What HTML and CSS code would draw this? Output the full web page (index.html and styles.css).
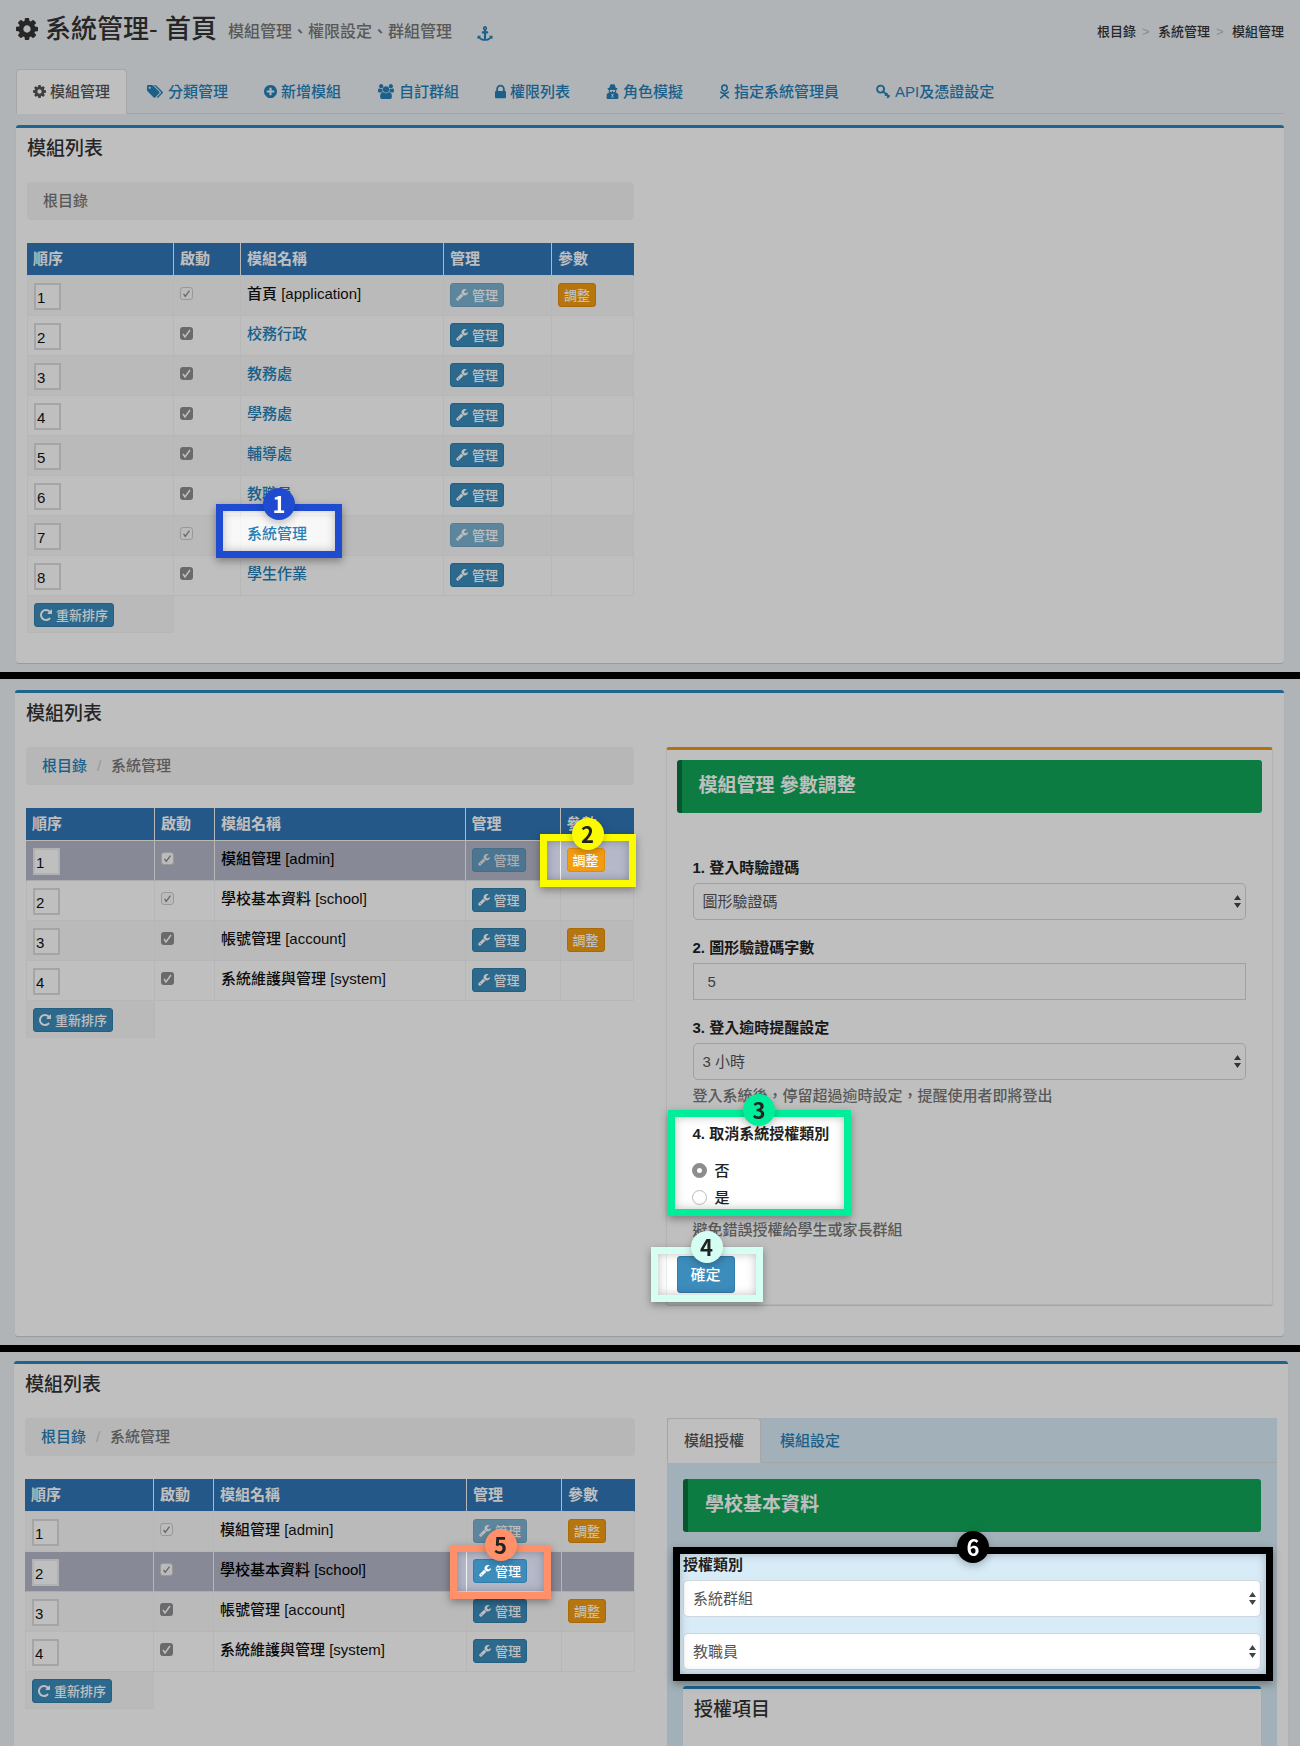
FILE: index.html
```html
<!DOCTYPE html>
<html lang="zh-Hant">
<head>
<meta charset="utf-8">
<title>系統管理 - 首頁</title>
<link rel="stylesheet" href="styles.css">
</head>
<body>
<svg class="sprite" aria-hidden="true">
  <symbol id="i-cog" viewBox="128 128 1536 1536"><path d="M1152 896q0-106-75-181t-181-75-181 75-75 181 75 181 181 75 181-75 75-181zm512-109v222q0 12-8 23t-20 13l-185 28q-19 54-39 91 35 50 107 138 10 12 10 25t-9 23q-27 37-99 108t-94 71q-12 0-26-9l-138-108q-44 23-91 38-16 136-29 186-7 28-36 28h-222q-14 0-24.5-8.5t-11.5-21.5l-28-184q-49-16-90-37l-141 107q-10 9-25 9-14 0-25-11-126-114-165-168-7-10-7-23 0-12 8-23 15-21 51-66.5t54-70.5q-27-50-41-99l-183-27q-13-2-21-12.5t-8-23.5v-222q0-12 8-23t19-13l186-28q14-46 39-92-40-57-107-138-10-12-10-24 0-10 9-23 26-36 98.5-107.5t94.5-71.5q13 0 26 10l138 107q44-23 91-38 16-136 29-186 7-28 36-28h222q14 0 24.5 8.5t11.5 21.5l28 184q49 16 90 37l142-107q9-9 24-9 13 0 25 10 129 119 165 170 7 8 7 22 0 12-8 23-15 21-51 66.5t-54 70.5q26 50 41 98l183 28q13 2 21 12.5t8 23.5z"/></symbol>
  <symbol id="i-anchor" viewBox="0 0 1792 1792"><path d="M960 256q0-26-19-45t-45-19-45 19-19 45 19 45 45 19 45-19 19-45zm832 928v352q0 22-20 30-8 2-12 2-12 0-23-9l-93-93q-119 143-318.5 226.5t-429.5 83.5-429.5-83.5-318.5-226.5l-93 93q-9 9-23 9-4 0-12-2-20-8-20-30v-352q0-14 9-23t23-9h352q22 0 30 20 8 19-7 35l-100 100q67 91 189.5 153.5t271.5 82.5v-647h-192q-26 0-45-19t-19-45v-128q0-26 19-45t45-19h192v-163q-58-34-93-92.5t-35-128.5q0-106 75-181t181-75 181 75 75 181q0 70-35 128.5t-93 92.5v163h192q26 0 45 19t19 45v128q0 26-19 45t-45 19h-192v647q149-20 271.5-82.5t189.5-153.5l-100-100q-15-16-7-35 8-20 30-20h352q14 0 23 9t9 23z"/></symbol>
  <symbol id="i-tags" viewBox="0 0 1920 1792"><path d="M448 448q0-53-37.5-90.5t-90.5-37.5-90.5 37.5-37.5 90.5 37.5 90.5 90.5 37.5 90.5-37.5 37.5-90.5zm1067 576q0 53-37 90l-491 492q-39 37-91 37-53 0-90-37l-715-716q-38-37-64.5-101t-26.5-117v-416q0-52 38-90t90-38h416q53 0 117 26.5t102 64.5l715 714q37 39 37 91zm384 0q0 53-37 90l-491 492q-39 37-91 37-36 0-59-14t-53-45l470-470q37-37 37-90 0-52-37-91l-715-714q-38-38-102-64.5t-117-26.5h224q53 0 117 26.5t102 64.5l715 714q37 39 37 91z"/></symbol>
  <symbol id="i-plus" viewBox="128 128 1536 1536"><path d="M1344 960v-128q0-26-19-45t-45-19h-256v-256q0-26-19-45t-45-19h-128q-26 0-45 19t-19 45v256h-256q-26 0-45 19t-19 45v128q0 26 19 45t45 19h256v256q0 26 19 45t45 19h128q26 0 45-19t19-45v-256h256q26 0 45-19t19-45zm320-64q0 209-103 385.5t-279.5 279.5-385.5 103-385.5-103-279.5-279.5-103-385.5 103-385.5 279.5-279.5 385.5-103 385.5 103 279.5 279.5 103 385.5z"/></symbol>
  <symbol id="i-users" viewBox="0 0 1920 1792"><path d="M593 896q-162 5-265 128h-134q-82 0-138-40.5t-56-118.5q0-353 124-353 6 0 43.5 21t97.5 42.5 119 21.5q67 0 133-23-5 37-5 66 0 139 81 256zm1071 637q0 120-73 189.5t-194 69.5h-874q-121 0-194-69.5t-73-189.5q0-53 3.5-103.5t14-109 26.5-108.5 43-97.5 62-81 85.5-53.5 111.5-20q10 0 43 21.5t73 48 107 48 135 21.5 135-21.5 107-48 73-48 43-21.5q61 0 111.5 20t85.5 53.5 62 81 43 97.5 26.5 108.5 14 109 3.5 103.5zm-1024-1277q0 106-75 181t-181 75-181-75-75-181 75-181 181-75 181 75 75 181zm704 384q0 159-112.5 271.5t-271.5 112.5-271.5-112.5-112.5-271.5 112.5-271.5 271.5-112.5 271.5 112.5 112.5 271.5zm576 225q0 78-56 118.5t-138 40.5h-134q-103-123-265-128 81-117 81-256 0-29-5-66 66 23 133 23 59 0 119-21.5t97.5-42.5 43.5-21q124 0 124 353zm-128-609q0 106-75 181t-181 75-181-75-75-181 75-181 181-75 181 75 75 181z"/></symbol>
  <symbol id="i-lock" viewBox="320 128 1152 1408"><path d="M640 768h512v-192q0-106-75-181t-181-75-181 75-75 181v192zm832 96v576q0 40-28 68t-68 28h-960q-40 0-68-28t-28-68v-576q0-40 28-68t68-28h32v-192q0-184 132-316t316-132 316 132 132 316v192h32q40 0 68 28t28 68z"/></symbol>
  <symbol id="i-secret" viewBox="0 0 24 28"><path fill-rule="evenodd" d="M8 1c1-1 2 0 4 0s3-1 4 0l2 6 3 1c1 1 0 2-2 3v3l-1 2c4 1 5 3 5 6v3c0 2-1 3-3 3H4c-2 0-3-1-3-3v-3c0-3 1-5 5-6l-1-2v-3C3 10 2 9 3 8l3-1zM7 11v2c1 3 4 3 4 0h2c0 3 3 3 4 0v-2zM9 18l2 3-1 5h1l1-4 1 4h1l-1-5 2-3-3 1z"/></symbol>
  <symbol id="i-child" viewBox="0 0 20 28"><path fill="none" stroke="currentColor" stroke-width="3" stroke-linecap="round" stroke-linejoin="round" d="M10 2a5 5.500 0 1 1 0 11a5 5.500 0 1 1 0-11M3 15q7 5 14 0M10 18v3M3 26l7-6 7 6"/></symbol>
  <symbol id="i-key" viewBox="0 0 28 28"><path fill="none" stroke="currentColor" stroke-width="3.500" d="M10 3a6 6 0 0 1 6 6c0 4-3 7-7 7a6 6 0 0 1-6-6c0-4 3-7 7-7M14 14l12 10M18 22l4-5M22 26l4-5"/></symbol>
  <symbol id="i-wrench" viewBox="64 128 1664 1664"><path d="M448 1472q0-26-19-45t-45-19-45 19-19 45 19 45 45 19 45-19 19-45zm644-420l-682 682q-37 37-90 37-52 0-91-37l-106-108q-38-36-38-90 0-53 38-91l681-681q39 98 114.500 173.500t173.500 114.500zm634-435q0 39-23 106-47 134-164.500 217.500t-258.500 83.500q-185 0-316.500-131.500t-131.500-316.500 131.500-316.500 316.500-131.500q58 0 121.500 16.500t107.500 46.500q16 11 16 28t-16 28l-293 169v224l193 107q5-3 79-48.500t135.500-81 70.500-35.500q15 0 23.500 10t8.500 25z"/></symbol>
  <symbol id="i-repeat" viewBox="128 128 1536 1536"><path d="M1664 256v448q0 26-19 45t-45 19h-448q-42 0-59-40-17-39 14-69l138-138q-148-137-349-137-104 0-198.500 40.500t-163.500 109.500-109.500 163.500-40.500 198.500 40.500 198.500 109.500 163.500 163.500 109.500 198.500 40.500q119 0 225-52t179-147q7-10 23-12 15 0 25 9l137 138q9 8 9.500 20.500t-7.500 22.500q-109 132-264 204.500t-327 72.500q-156 0-298-61t-245-164-164-245-61-298 61-298 164-245 245-164 298-61q147 0 284.500 55.500t244.500 156.500l130-129q29-31 70-14 39 17 39 59z"/></symbol>
</svg>

<section class="shot shot-home">
  <header class="page-head">
    <h1><svg class="icon icon-title"><use href="#i-cog"/></svg>系統管理- 首頁</h1>
    <small>模組管理、權限設定、群組管理</small>
    <a href="#anchor" class="anchor" aria-label="連結"><svg class="icon icon-16"><use href="#i-anchor"/></svg></a>
    <nav class="crumbs"><a href="#root">根目錄</a><span>&gt;</span><a href="#sys">系統管理</a><span>&gt;</span><a href="#mod">模組管理</a></nav>
  </header>
  <nav class="tabs">
    <a href="#t1" class="active"><svg class="icon icon-13"><use href="#i-cog"/></svg>模組管理</a>
    <a href="#t2"><svg class="icon icon-18"><use href="#i-tags"/></svg>分類管理</a>
    <a href="#t3"><svg class="icon icon-13"><use href="#i-plus"/></svg>新增模組</a>
    <a href="#t4"><svg class="icon icon-18"><use href="#i-users"/></svg>自訂群組</a>
    <a href="#t5"><svg class="icon icon-11"><use href="#i-lock"/></svg>權限列表</a>
    <a href="#t6"><svg class="icon icon-13"><use href="#i-secret"/></svg>角色模擬</a>
    <a href="#t7"><svg class="icon icon-11"><use href="#i-child"/></svg>指定系統管理員</a>
    <a href="#t8"><svg class="icon icon-16"><use href="#i-key"/></svg>API及憑證設定</a>
  </nav>
  <div class="panel">
    <h2>模組列表</h2>
    <div class="columns">
      <div>
        <div class="path"><span>根目錄</span></div>
        <table class="modules wide">
          <colgroup><col class="c-order"><col class="c-on"><col><col class="c-manage"><col class="c-param"></colgroup>
          <thead><tr><th>順序</th><th>啟動</th><th>模組名稱</th><th>管理</th><th>參數</th></tr></thead>
          <tbody>
            <tr><td><input type="text" value="1" aria-label="順序"></td><td><input type="checkbox" checked disabled aria-label="啟動"></td><td>首頁 [application]</td><td><button class="btn" disabled><svg class="icon icon-12"><use href="#i-wrench"/></svg>管理</button></td><td><button class="btn warn">調整</button></td></tr>
            <tr><td><input type="text" value="2" aria-label="順序"></td><td><input type="checkbox" checked aria-label="啟動"></td><td><a href="#m2">校務行政</a></td><td><button class="btn"><svg class="icon icon-12"><use href="#i-wrench"/></svg>管理</button></td><td></td></tr>
            <tr><td><input type="text" value="3" aria-label="順序"></td><td><input type="checkbox" checked aria-label="啟動"></td><td><a href="#m3">教務處</a></td><td><button class="btn"><svg class="icon icon-12"><use href="#i-wrench"/></svg>管理</button></td><td></td></tr>
            <tr><td><input type="text" value="4" aria-label="順序"></td><td><input type="checkbox" checked aria-label="啟動"></td><td><a href="#m4">學務處</a></td><td><button class="btn"><svg class="icon icon-12"><use href="#i-wrench"/></svg>管理</button></td><td></td></tr>
            <tr><td><input type="text" value="5" aria-label="順序"></td><td><input type="checkbox" checked aria-label="啟動"></td><td><a href="#m5">輔導處</a></td><td><button class="btn"><svg class="icon icon-12"><use href="#i-wrench"/></svg>管理</button></td><td></td></tr>
            <tr><td><input type="text" value="6" aria-label="順序"></td><td><input type="checkbox" checked aria-label="啟動"></td><td><a href="#m6">教職員</a></td><td><button class="btn"><svg class="icon icon-12"><use href="#i-wrench"/></svg>管理</button></td><td></td></tr>
            <tr><td><input type="text" value="7" aria-label="順序"></td><td><input type="checkbox" checked disabled aria-label="啟動"></td><td class="anchor-cell"><a href="#m7">系統管理</a><div class="spot spot-1"><b>1</b></div></td><td><button class="btn" disabled><svg class="icon icon-12"><use href="#i-wrench"/></svg>管理</button></td><td></td></tr>
            <tr><td><input type="text" value="8" aria-label="順序"></td><td><input type="checkbox" checked aria-label="啟動"></td><td><a href="#m8">學生作業</a></td><td><button class="btn"><svg class="icon icon-12"><use href="#i-wrench"/></svg>管理</button></td><td></td></tr>
          </tbody>
          <tfoot><tr><td><button class="btn"><svg class="icon icon-12"><use href="#i-repeat"/></svg>重新排序</button></td></tr></tfoot>
        </table>
      </div>
    </div>
  </div>
</section>

<section class="shot shot-params">
  <div class="panel">
    <h2>模組列表</h2>
    <div class="columns">
      <div>
        <div class="path"><a href="#root">根目錄</a><i>/</i><span>系統管理</span></div>
        <table class="modules">
          <colgroup><col class="c-order"><col class="c-on"><col><col class="c-manage"><col class="c-param"></colgroup>
          <thead><tr><th>順序</th><th>啟動</th><th>模組名稱</th><th>管理</th><th>參數</th></tr></thead>
          <tbody>
            <tr class="current"><td><input type="text" value="1" aria-label="順序"></td><td><input type="checkbox" checked disabled aria-label="啟動"></td><td>模組管理 [admin]</td><td><button class="btn" disabled><svg class="icon icon-12"><use href="#i-wrench"/></svg>管理</button></td><td class="anchor-cell"><button class="btn warn">調整</button><div class="spot spot-2"><b>2</b></div></td></tr>
            <tr><td><input type="text" value="2" aria-label="順序"></td><td><input type="checkbox" checked disabled aria-label="啟動"></td><td>學校基本資料 [school]</td><td><button class="btn"><svg class="icon icon-12"><use href="#i-wrench"/></svg>管理</button></td><td></td></tr>
            <tr><td><input type="text" value="3" aria-label="順序"></td><td><input type="checkbox" checked aria-label="啟動"></td><td>帳號管理 [account]</td><td><button class="btn"><svg class="icon icon-12"><use href="#i-wrench"/></svg>管理</button></td><td><button class="btn warn">調整</button></td></tr>
            <tr><td><input type="text" value="4" aria-label="順序"></td><td><input type="checkbox" checked aria-label="啟動"></td><td>系統維護與管理 [system]</td><td><button class="btn"><svg class="icon icon-12"><use href="#i-wrench"/></svg>管理</button></td><td></td></tr>
          </tbody>
          <tfoot><tr><td><button class="btn"><svg class="icon icon-12"><use href="#i-repeat"/></svg>重新排序</button></td></tr></tfoot>
        </table>
      </div>
      <form class="param-box">
        <h3 class="banner">模組管理 參數調整</h3>
        <div class="fields">
          <div class="field"><label for="captcha">1. 登入時驗證碼</label><select id="captcha"><option>圖形驗證碼</option></select></div>
          <div class="field"><label for="digits">2. 圖形驗證碼字數</label><input class="text" type="text" id="digits" value="5"></div>
          <div class="field"><label for="timeout">3. 登入逾時提醒設定</label><select id="timeout"><option>3 小時</option></select><p>登入系統後，停留超過逾時設定，提醒使用者即將登出</p></div>
          <div class="choice" role="radiogroup" aria-labelledby="cancel-title">
            <p id="cancel-title">4. 取消系統授權類別</p>
            <label><input type="radio" name="cancel" checked>否</label>
            <label><input type="radio" name="cancel">是</label>
            <div class="spot spot-3"><b>3</b></div>
          </div>
          <p class="hint">避免錯誤授權給學生或家長群組</p>
        </div>
        <div class="submit"><button type="button" class="btn large">確定</button><div class="spot spot-4"><b>4</b></div></div>
      </form>
    </div>
  </div>
</section>

<section class="shot shot-grant">
  <div class="panel">
    <h2>模組列表</h2>
    <div class="columns">
      <div>
        <div class="path"><a href="#root">根目錄</a><i>/</i><span>系統管理</span></div>
        <table class="modules">
          <colgroup><col class="c-order"><col class="c-on"><col><col class="c-manage"><col class="c-param"></colgroup>
          <thead><tr><th>順序</th><th>啟動</th><th>模組名稱</th><th>管理</th><th>參數</th></tr></thead>
          <tbody>
            <tr><td><input type="text" value="1" aria-label="順序"></td><td><input type="checkbox" checked disabled aria-label="啟動"></td><td>模組管理 [admin]</td><td><button class="btn" disabled><svg class="icon icon-12"><use href="#i-wrench"/></svg>管理</button></td><td><button class="btn warn">調整</button></td></tr>
            <tr class="current"><td><input type="text" value="2" aria-label="順序"></td><td><input type="checkbox" checked disabled aria-label="啟動"></td><td>學校基本資料 [school]</td><td class="anchor-cell"><button class="btn"><svg class="icon icon-12"><use href="#i-wrench"/></svg>管理</button><div class="spot spot-5"><b>5</b></div></td><td></td></tr>
            <tr><td><input type="text" value="3" aria-label="順序"></td><td><input type="checkbox" checked aria-label="啟動"></td><td>帳號管理 [account]</td><td><button class="btn"><svg class="icon icon-12"><use href="#i-wrench"/></svg>管理</button></td><td><button class="btn warn">調整</button></td></tr>
            <tr><td><input type="text" value="4" aria-label="順序"></td><td><input type="checkbox" checked aria-label="啟動"></td><td>系統維護與管理 [system]</td><td><button class="btn"><svg class="icon icon-12"><use href="#i-wrench"/></svg>管理</button></td><td></td></tr>
          </tbody>
          <tfoot><tr><td><button class="btn"><svg class="icon icon-12"><use href="#i-repeat"/></svg>重新排序</button></td></tr></tfoot>
        </table>
      </div>
      <div class="grant-box">
        <nav class="tabs">
          <a href="#g1" class="active">模組授權</a>
          <a href="#g2">模組設定</a>
        </nav>
        <div class="grant-body">
          <h3 class="banner">學校基本資料</h3>
          <div class="grant-type">
            <label for="group">授權類別</label>
            <select id="group"><option>系統群組</option></select>
            <select aria-label="身分"><option>教職員</option></select>
            <div class="spot spot-6"><b>6</b></div>
          </div>
          <div class="panel items"><h2>授權項目</h2></div>
        </div>
      </div>
    </div>
  </div>
</section>
</body>
</html>
```
FILE: styles.css
```css
* { box-sizing: border-box; }

body {
  margin: 0;
  background: #000;
  color: #333;
  font: 15px/21px "Liberation Sans", "Noto Sans CJK TC", sans-serif;
}

h1, h2, h3, p { margin: 0; }
a { color: #2480b8; text-decoration: none; font-weight: 500; }
input, select, button { font: inherit; }

.sprite { position: absolute; width: 0; height: 0; }
.icon { fill: currentColor; flex: none; height: 15px; }
.icon-11 { width: 11px; }
.icon-12 { width: 12px; height: 12px; }
.icon-13 { width: 13px; }
.icon-16 { width: 16px; }
.icon-18 { width: 18px; }
.icon-title { width: 22px; height: 22px; }

/* Each step is a dimmed screen; spotlights restore the brightness */
.shot {
  position: relative;
  overflow: hidden;
  background: #ecf0f5;
}
.shot::after {
  content: "";
  position: absolute;
  inset: 0;
  z-index: 1;
  background: rgba(0, 0, 0, .25);
  pointer-events: none;
}
.shot + .shot { margin-top: 7px; }
.shot-home { padding: 14px 16px 9px; }
.shot-params { padding: 11px 16px 9px 15px; }
.shot-grant { padding: 9px 12px 0 14px; }

/* Page header */
.page-head { display: flex; align-items: center; height: 30px; }
.page-head h1 {
  display: flex;
  align-items: center;
  gap: 7px;
  font-size: 26px;
  line-height: 30px;
  font-weight: 500;
}
.page-head small { margin-left: 11px; padding-top: 4px; font-size: 16px; color: #777; font-weight: 500; }
.anchor { display: flex; margin-left: 25px; padding-top: 8px; }
.crumbs { display: flex; margin-left: auto; padding-top: 4px; font-size: 13px; }
.crumbs a { color: #333; }
.crumbs span { width: 22px; padding-left: 6px; color: #bbb; }

/* Tabs */
.tabs { display: flex; gap: 2px; border-bottom: 1px solid #ddd; }
.tabs a {
  display: flex;
  align-items: center;
  gap: 4px;
  height: 45px;
  margin-bottom: -1px;
  padding: 0 16px;
  border: 1px solid transparent;
  border-radius: 4px 4px 0 0;
}
.tabs .active { background: #fff; border-color: #ddd #ddd #fff; color: #555; }
.shot-home .tabs { margin-top: 25px; }
.shot-home .panel { margin-top: 11px; }

/* Panels */
.panel {
  padding: 10px 11px 31px;
  background: #fff;
  border-top: 3px solid #2a86be;
  border-radius: 3px;
  box-shadow: 0 1px 1px rgba(0, 0, 0, .15);
}
.panel h2 { font-size: 19px; line-height: 22px; font-weight: 500; }
.columns {
  display: grid;
  grid-template-columns: 1fr 1fr;
  gap: 32px;
  align-items: start;
  margin-top: 22px;
}
.shot-home > .panel { padding-bottom: 30px; }
.shot-grant > .panel { padding-bottom: 0; border-radius: 3px 3px 0 0; }

.path {
  display: flex;
  align-items: center;
  height: 38px;
  margin-bottom: 23px;
  padding: 0 16px 2px;
  background: #f5f5f5;
  border-radius: 4px;
  color: #777;
  font-weight: 500;
}
.path i { width: 24px; text-align: center; color: #ccc; font-style: normal; font-weight: 400; }

/* Module table */
.modules { width: 100%; table-layout: fixed; border-collapse: separate; border-spacing: 0; color: #111; }
.c-order { width: 129px; }
.c-on { width: 60px; }
.c-manage { width: 95px; }
.c-param { width: 73px; }
.wide .c-order { width: 147px; }
.wide .c-on { width: 67px; }
.wide .c-manage { width: 108px; }
.wide .c-param { width: 82px; }
.modules th, .modules td {
  padding: 7px 6px 5px;
  text-align: left;
  vertical-align: top;
  border-right: 1px solid #f4f4f4;
  border-bottom: 1px solid #f4f4f4;
}
.modules th { height: 33px; padding: 5px 6px; background: #2f76b6; color: #fff; font-weight: 700; }
.modules th:last-child { border-right-color: #2f76b6; }
.modules tbody td { height: 40px; font-weight: 500; }
.modules td:first-child { border-left: 1px solid #f4f4f4; }
.modules tbody tr:nth-child(odd), .modules tfoot td { background: #f9f9f9; }
.modules tfoot td { height: 36px; }
.modules tbody tr.current { background: #b4b9c8; color: #000; }
.modules .current td { border-bottom-color: #e4e6ea; }
.modules .current td:first-child { border-left-color: #b4b9c8; }
.anchor-cell { position: relative; }

.modules input[type="text"] {
  display: block;
  width: 27px;
  height: 27px;
  padding: 1px 1px 0;
  border: 2px solid #ddd;
  background: #fff;
  color: #111;
}
.modules .current input[type="text"] { border-color: #eee; }
.modules input[type="checkbox"] {
  appearance: none;
  display: block;
  width: 13px;
  height: 13px;
  margin: 4px 0 0;
  border-radius: 3px;
  background: #8e8e90 url("data:image/svg+xml,%3Csvg xmlns='http://www.w3.org/2000/svg' viewBox='0 0 13 13'%3E%3Cpath d='M3 7l2 3 5-7' fill='none' stroke='%23fff' stroke-width='1.500'/%3E%3C/svg%3E");
}
.modules input[type="checkbox"]:disabled {
  border: 1px solid #ccc;
  background: #fafafa url("data:image/svg+xml,%3Csvg xmlns='http://www.w3.org/2000/svg' viewBox='0 0 13 13'%3E%3Cpath d='M3 7l2 3 5-7' fill='none' stroke='%23888' stroke-width='1.500'/%3E%3C/svg%3E");
}

.btn {
  display: flex;
  align-items: center;
  gap: 4px;
  height: 24px;
  padding: 0 5px;
  border: 1px solid #307fab;
  border-radius: 3px;
  background: #3c8dbc;
  color: #fff;
  font-size: 13px;
  font-weight: 500;
  white-space: nowrap;
}
.btn:disabled { opacity: .65; }
.btn.warn { background: #f39c12; border-color: #e08e0b; }
.btn.large { height: 37px; padding: 0 13px; font-size: 15px; }

/* Parameter form */
.param-box {
  padding: 10px 10px 11px;
  border: 1px solid #f0f0f0;
  border-top: 3px solid #f39512;
  border-radius: 3px;
  box-shadow: 0 1px 1px rgba(0, 0, 0, .15);
}
.banner {
  height: 53px;
  padding: 0 17px;
  border-left: 5px solid #08743d;
  border-radius: 3px;
  background: #11a65a;
  color: #fff;
  font-size: 19px;
  line-height: 51px;
  font-weight: 700;
}
.fields { padding: 44px 16px 16px; }
.field { margin-bottom: 17px; }
.field label, .grant-type label { display: block; margin-bottom: 5px; color: #222; font-weight: 700; }
.field p, .hint { color: #777; font-weight: 500; }
.field p { margin-top: 5px; }

select, .text {
  display: block;
  width: 100%;
  height: 37px;
  padding: 0 9px;
  border: 1px solid #d2d6de;
  background: #fff;
  color: #555;
}
.text { padding: 0 14px; }
select {
  appearance: none;
  border-radius: 5px;
  background: #fff url("data:image/svg+xml,%3Csvg xmlns='http://www.w3.org/2000/svg' viewBox='0 0 7 13'%3E%3Cpath d='M0 5l3.500-5 3.500 5zM0 8h7l-3.500 5z' fill='%23444'/%3E%3C/svg%3E") no-repeat right 4px center / 7px 13px;
}

.choice { position: relative; margin-bottom: 11px; }
.choice p { margin-bottom: 16px; color: #222; font-weight: 700; }
.choice label { display: flex; align-items: center; gap: 8px; height: 21px; color: #222; font-weight: 500; }
.choice label + label { margin-top: 6px; }
.choice input {
  appearance: none;
  width: 15px;
  height: 15px;
  margin: 0 0 0 -1px;
  border: 1px solid #bbb;
  border-radius: 50%;
  background: #fff;
}
.choice input:checked { border: 5px solid #8e8e90; }
.submit { position: relative; width: max-content; }

/* Authorisation box */
.grant-box { background: #d9edf7; }
.grant-body { padding: 16px 16px 0; }
.grant-type { position: relative; margin: 22px 0 16px; }
.grant-type select + select { margin-top: 16px; }
.grant-box .items { padding-bottom: 25px; border-radius: 3px 3px 0 0; }

/* Spotlights */
.spot {
  position: absolute;
  z-index: 2;
  border: 7px solid var(--tone);
  backdrop-filter: brightness(1.333);
  box-shadow: 0 3px 8px rgba(0, 0, 0, .35), inset 0 0 10px rgba(0, 0, 0, .25);
  pointer-events: none;
}
.spot b {
  position: absolute;
  top: -23px;
  left: 50%;
  width: 32px;
  height: 32px;
  margin-left: -16px;
  border-radius: 50%;
  background: var(--tone);
  box-shadow: 0 3px 8px rgba(0, 0, 0, .25);
  color: #222;
  font: 700 22px/30px "Noto Sans CJK TC", sans-serif;
  text-align: center;
}
.spot-1 { --tone: #1e4bd0; inset: -12px auto auto -25px; width: 126px; height: 54px; }
.spot-2 { --tone: #fbfb00; inset: -7px -3px -7px -21px; }
.spot-3 { --tone: #00ee99; inset: -13px auto -8px -25px; width: 183px; }
.spot-4 { --tone: #d6fff3; inset: -9px -28px -9px -26px; }
.spot-5 { --tone: #ff9069; inset: -7px 10px -8px -17px; }
.spot-6 { --tone: #000; inset: -7px -12px -11px -10px; }
.spot-1 b, .spot-6 b { color: #fff; }
```
